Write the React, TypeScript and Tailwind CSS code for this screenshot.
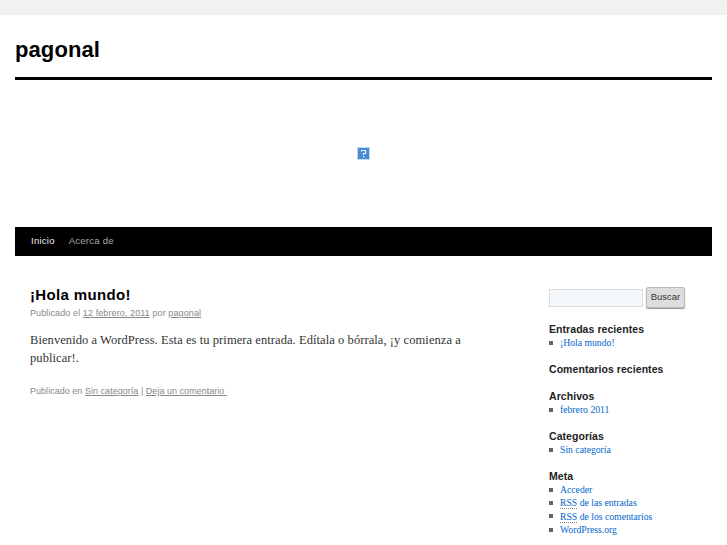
const recent = ["¡Hola mundo!"];
const archives = ["febrero 2011"];
const cats = ["Sin categoría"];

const sans = "font-['Liberation_Sans',Arial,sans-serif]";
const serif = "font-['Liberation_Serif','Times_New_Roman',serif]";

const Bullet = () => <span className="w-[4px] h-[4px] bg-[#666] mr-[7px]" />;

const Widget = ({ title, items, children }: { title: string; items?: string[]; children?: React.ReactNode }) => (
  <div className="mb-[13px]">
    <h3 className="text-[10.5px] leading-[14px] font-bold text-[#222] tracking-[0.06px]">{title}</h3>
    {items && (
      <ul className={`${serif} text-[9.7px] leading-[13px]`}>
        {items.map((item) => (
          <li key={item} className="flex items-center">
            <Bullet />
            <span className="text-[#0066cc]">{item}</span>
          </li>
        ))}
      </ul>
    )}
    {children}
  </div>
);

const BrokenImage = () => (
  <svg width="13" height="13" viewBox="0 0 13 13">
    <rect width="13" height="13" fill="#c3d9f0" />
    <rect x="1" y="1" width="11" height="11" fill="#4a8ad0" />
    <path d="M4.5 4.5 V3.5 H8.5 V6.5 H6.5 V8" fill="none" stroke="#e8f0f8" strokeWidth="1.2" />
    <rect x="6" y="9" width="1.3" height="1.5" fill="#e8f0f8" />
  </svg>
);

const App = () => {
  return (
    <div className={`${sans} w-[727px] h-[545px] overflow-hidden bg-white text-[#111]`}>
      <div className="h-[15px] bg-[#f1f1f1]" />

      <div className="px-[15px]">
        <header className="h-[65px] border-b-[3px] border-black">
          <h1 className="pt-[21px] text-[22px] leading-[28px] font-bold text-black tracking-[0.1px]">pagonal</h1>
        </header>

        <div className="h-[147px] flex justify-center pt-[67px]">
          <BrokenImage />
        </div>

        <nav className="h-[29px] bg-black flex items-center pl-[16px] gap-[14px] text-[9.5px] tracking-[0.25px]">
          <span className="text-[#eeeeee]">Inicio</span>
          <span className="text-[#aaaaaa]">Acerca de</span>
        </nav>

        <div className="flex mt-[29px]">
          <main className="w-[534px] pl-[15px] shrink-0">
            <h2 className="text-[15px] leading-[20px] font-bold text-black tracking-[0.35px]">¡Hola mundo!</h2>
            <p className="text-[9px] leading-[14px] text-[#888] tracking-[0.1px] mt-[1px]">
              Publicado el <span className="underline">12 febrero, 2011</span> por{" "}
              <span className="underline">pagonal</span>
            </p>
            <p className={`${serif} w-[440px] text-[12.5px] leading-[18px] text-[#333] mt-[11px] tracking-[0.07px]`}>
              Bienvenido a WordPress. Esta es tu primera entrada. Edítala o bórrala, ¡y comienza a publicar!.
            </p>
            <p className="text-[9px] leading-[14px] text-[#888] mt-[17px] tracking-[0.03px]">
              Publicado en <span className="underline">Sin categoría</span> |{" "}
              <span className="underline">Deja un comentario&nbsp;</span>
            </p>
          </main>

          <aside className="flex-1 min-w-0">
            <div className="flex items-center mt-[2px] mb-[14px]">
              <div className="w-[94px] h-[18px] bg-[#f4f8fb] border border-[#dddddd]" />
              <div className="ml-[3px] w-[39px] h-[21px] bg-[#dddddd] border border-[#bbbbbb] rounded-[2px] text-[9.5px] text-[#333] flex items-center justify-center shadow-[0_1px_1px_#999]">
                Buscar
              </div>
            </div>
            <Widget title="Entradas recientes" items={recent} />
            <Widget title="Comentarios recientes" />
            <Widget title="Archivos" items={archives} />
            <Widget title="Categorías" items={cats} />
            <div>
              <h3 className="text-[10.5px] leading-[14px] font-bold text-[#222] tracking-[0.06px]">Meta</h3>
              <ul className={`${serif} text-[9.7px] leading-[13.3px] text-[#0066cc]`}>
                <li className="flex items-center">
                  <Bullet />
                  Acceder
                </li>
                <li className="flex items-center">
                  <Bullet />
                  <span>
                    <span className="border-b border-dotted border-[#888]">RSS</span> de las entradas
                  </span>
                </li>
                <li className="flex items-center">
                  <Bullet />
                  <span>
                    <span className="border-b border-dotted border-[#888]">RSS</span> de los comentarios
                  </span>
                </li>
                <li className="flex items-center">
                  <Bullet />
                  WordPress.org
                </li>
              </ul>
            </div>
          </aside>
        </div>
      </div>
    </div>
  );
};

export default App;
